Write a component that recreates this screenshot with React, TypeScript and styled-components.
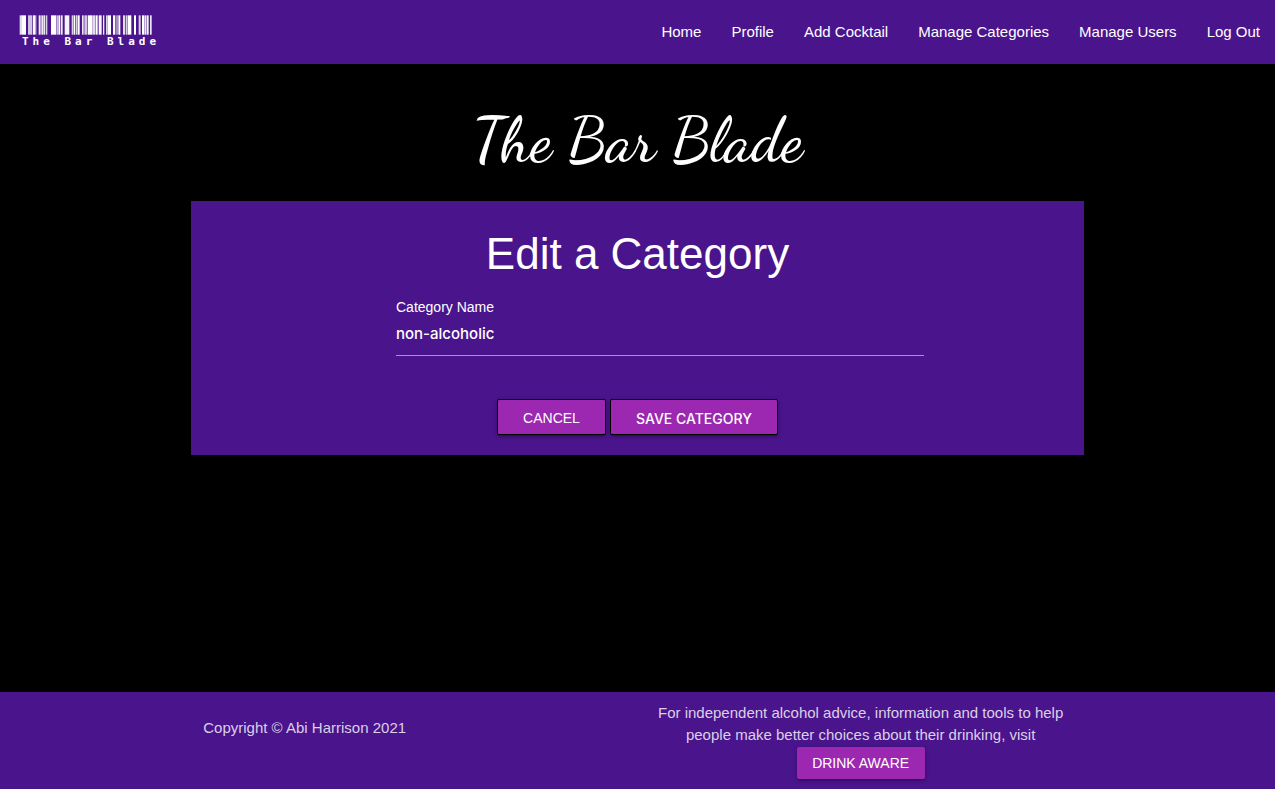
import React from 'react';
import styled, { createGlobalStyle } from 'styled-components';

const GlobalStyle = createGlobalStyle`
  *, *::before, *::after { box-sizing: border-box; }
  body {
    margin: 0;
    background: #000;
    color: #fff;
    font-family: "Liberation Sans", Arial, sans-serif;
    font-size: 15px;
    line-height: 22px;
  }
`;

const Page = styled.div`
  min-height: 100vh;
  display: flex;
  flex-direction: column;
`;

const NavBar = styled.nav`
  display: flex;
  justify-content: space-between;
  align-items: center;
  height: 64px;
  background: #4a148c;
`;

const Brand = styled.a`
  display: block;
  margin-left: 19px;
  color: #fff;
  text-decoration: none;
`;

const Barcode = styled.svg`
  display: block;
  width: 138px;
  height: 20px;
`;

const BrandName = styled.span`
  display: block;
  padding-left: 3px;
  font-family: "DejaVu Sans Mono", monospace;
  font-weight: 700;
  font-size: 11px;
  line-height: 14px;
  letter-spacing: 4px;
`;

const NavList = styled.ul`
  display: flex;
  margin: 0;
  padding: 0;
  list-style: none;
`;

const NavLink = styled.a`
  display: block;
  padding: 0 15px;
  line-height: 64px;
  color: #fff;
  text-decoration: none;
`;

const Main = styled.main`
  flex: 1;
  width: 70%;
  margin: 0 auto;
`;

const Title = styled.h1`
  margin: 40px 0 24px;
  font-family: "Dancing Script", "Liberation Serif", cursive;
  font-weight: 500;
  font-size: 62px;
  line-height: 73px;
  text-align: center;
`;

const Card = styled.section`
  padding: 28px 0 20px;
  background: #4a148c;
`;

const CardTitle = styled.h2`
  margin: 0 0 16px;
  font-weight: 400;
  font-size: 44px;
  line-height: 50px;
  text-align: center;
`;

const Field = styled.div`
  display: flex;
  flex-direction: column;
  width: 66.6667%;
  margin: 0 auto;
  padding: 0 11px 0 56px;
`;

const Label = styled.label`
  font-size: 14px;
  line-height: 24px;
`;

const TextInput = styled.input`
  height: 37px;
  padding: 0 0 8px;
  border: 0;
  border-bottom: 1px solid #9e9e9e;
  outline: 0;
  background: transparent;
  color: #fff;
  font-family: Inter, sans-serif;
  font-weight: 500;
  font-size: 15px;
`;

const Actions = styled.div`
  display: flex;
  justify-content: center;
  gap: 4px;
  margin-top: 43px;
`;

const buttonLook = `
  display: inline-block;
  border-radius: 2px;
  background: #9c27b0;
  color: #fff;
  font-size: 14px;
  text-transform: uppercase;
  text-decoration: none;
  text-align: center;
  box-shadow: 0 2px 2px 0 rgba(0,0,0,.14), 0 3px 1px -2px rgba(0,0,0,.12), 0 1px 5px 0 rgba(0,0,0,.2);
`;

const ButtonLink = styled.a`
  ${buttonLook}
  min-width: 109px;
  height: 36px;
  padding: 0 24px;
  border: 1px solid #000;
  line-height: 36px;
`;

const SubmitButton = styled.button`
  ${buttonLook}
  min-width: 168px;
  height: 36px;
  padding: 2px 23px 0;
  border: 1px solid #000;
  font-family: Inter, sans-serif;
  font-weight: 500;
`;

const Footer = styled.footer`
  background: #4a148c;
  color: #dbd0e8;
`;

const FooterRow = styled.div`
  display: flex;
  width: 70%;
  margin: 0 auto;
  padding: 10px 0;
`;

const Copyright = styled.div`
  flex: 1;
  padding: 15px 12px;
`;

const Advice = styled.div`
  flex: 1;
  display: flex;
  flex-direction: column;
  align-items: center;
  gap: 1px;
  padding: 0 12px;
  text-align: center;
`;

const AdviceText = styled.p`
  margin: 0;
`;

const AwareLink = styled.a`
  ${buttonLook}
  min-width: 128px;
  padding: 0 15px;
  line-height: 32px;
`;

const navItems = ['Home', 'Profile', 'Add Cocktail', 'Manage Categories', 'Manage Users', 'Log Out'];

// Barcode stripes as [offset, width, opacity]
const bars: [number, number, number][] = [
  [2, 7, 0.85], [9, 12, 1], [27, 13, 0.75], [42, 8, 1], [51, 2, 0.4],
  [59, 6, 0.9], [67, 5, 0.9], [73, 5, 0.9], [80, 5, 0.8],
  [96, 15, 1], [112, 5, 0.7], [118, 5, 1], [125, 6, 0.9], [137, 14, 0.95],
  [158, 5, 0.8], [164, 5, 1], [171, 4, 0.8], [176, 6, 1],
  [189, 5, 0.9], [196, 8, 0.75], [206, 15, 1], [222, 7, 0.85], [230, 6, 1],
  [239, 9, 0.95], [252, 4, 0.9], [261, 3, 0.8], [265, 11, 1],
  [282, 7, 1], [292, 4, 0.75], [298, 6, 1], [312, 6, 0.85], [320, 5, 0.8], [326, 11, 1],
  [345, 6, 1], [359, 6, 0.8], [369, 6, 1], [376, 6, 0.9], [383, 6, 0.95], [393, 5, 0.9],
];

export default function App() {
  return (
    <Page>
      <GlobalStyle />
      <NavBar>
        <Brand href="#">
          <Barcode viewBox="0 0 414 60" fill="currentColor" aria-hidden="true">
            {bars.map(([x, w, o]) => (
              <rect key={x} x={x} y="1" width={w} height="58" opacity={o} />
            ))}
          </Barcode>
          <BrandName>The Bar Blade</BrandName>
        </Brand>
        <NavList>
          {navItems.map((item) => (
            <li key={item}><NavLink href="#">{item}</NavLink></li>
          ))}
        </NavList>
      </NavBar>
      <Main>
        <Title>The Bar Blade</Title>
        <Card>
          <CardTitle>Edit a Category</CardTitle>
          <form onSubmit={(e) => e.preventDefault()}>
            <Field>
              <Label htmlFor="category_name">Category Name</Label>
              <TextInput id="category_name" type="text" defaultValue="non-alcoholic" />
            </Field>
            <Actions>
              <ButtonLink href="#">Cancel</ButtonLink>
              <SubmitButton type="submit">Save Category</SubmitButton>
            </Actions>
          </form>
        </Card>
      </Main>
      <Footer>
        <FooterRow>
          <Copyright>Copyright © Abi Harrison 2021</Copyright>
          <Advice>
            <AdviceText>
              For independent alcohol advice, information and tools to help people make better choices about their drinking, visit
            </AdviceText>
            <AwareLink href="#">Drink Aware</AwareLink>
          </Advice>
        </FooterRow>
      </Footer>
    </Page>
  );
}
